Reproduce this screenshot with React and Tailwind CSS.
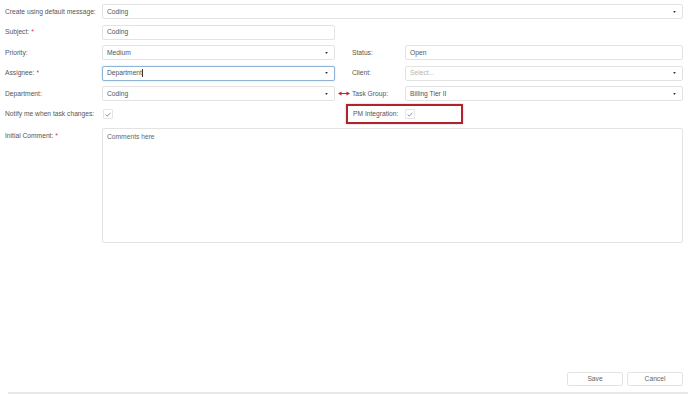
import React from 'react';

const Caret = () => (
  <svg width="3" height="2" viewBox="0 0 4 3" className="shrink-0 mr-[2px]">
    <path d="M0 0 L4 0 L2 3 Z" fill="#333" />
  </svg>
);

const Req = () => <span className="text-[#d33] ml-[2px]">*</span>;

const Field = ({ value, placeholder, select, focused, className = '' }) => (
  <div
    className={`h-[15px] flex items-center justify-between px-[4px] rounded-[2px] border bg-white ${
      focused ? 'border-[#8fb4d6] shadow-[0_0_2px_#bcd4ea]' : 'border-[#e3e3e3]'
    } ${className}`}
  >
    <span className={value ? 'text-[#555]' : 'text-[#b5b5b5]'}>
      {value || placeholder}
      {focused && <span className="inline-block w-px h-[8px] bg-[#333] align-middle" />}
    </span>
    {select && <Caret />}
  </div>
);

const Check = () => (
  <div className="w-[10px] h-[10px] rounded-[1px] border border-[#e6e6e6] flex items-center justify-center">
    <svg width="6" height="5" viewBox="0 0 6 5">
      <path d="M0.6 2.6 L2.3 4.1 L5.4 0.8" stroke="#6a8bb0" strokeWidth="0.9" fill="none" />
    </svg>
  </div>
);

const Arrows = () => (
  <svg width="12" height="5" viewBox="0 0 12 5">
    <path d="M0 2.5 L3.5 0.5 L3.5 4.5 Z" fill="#c0262d" />
    <path d="M12 2.5 L8.5 0.5 L8.5 4.5 Z" fill="#c0262d" />
    <rect x="3" y="2" width="6" height="1" fill="#c0262d" />
  </svg>
);

export default function App() {
  return (
    <div
      className="h-screen bg-white flex flex-col text-[6.7px] text-[#555]"
      style={{ fontFamily: '"Liberation Sans", Arial, sans-serif' }}
    >
      <div className="pt-[1.5px] pr-[5px]">
        {/* row 1 */}
        <div className="h-[20.5px] flex items-center">
          <div className="w-[102px] pl-[5px] shrink-0">Create using default message:</div>
          <Field value="Coding" select className="flex-1" />
        </div>

        {/* row 2 */}
        <div className="h-[20.5px] flex items-center">
          <div className="w-[102px] pl-[5px] shrink-0">Subject:<Req /></div>
          <Field value="Coding" className="w-[233px]" />
        </div>

        {/* row 3 */}
        <div className="h-[20.5px] flex items-center">
          <div className="w-[102px] pl-[5px] shrink-0">Priority:</div>
          <Field value="Medium" select className="w-[233px]" />
          <div className="w-[17px]" />
          <div className="w-[53px] shrink-0">Status:</div>
          <Field value="Open" className="flex-1" />
        </div>

        {/* row 4 */}
        <div className="h-[20.5px] flex items-center">
          <div className="w-[102px] pl-[5px] shrink-0">Assignee:<Req /></div>
          <Field value="Department" select focused className="w-[233px]" />
          <div className="w-[17px]" />
          <div className="w-[53px] shrink-0">Client:</div>
          <Field placeholder="Select..." select className="flex-1" />
        </div>

        {/* row 5 */}
        <div className="h-[20.5px] flex items-center">
          <div className="w-[102px] pl-[5px] shrink-0">Department:</div>
          <Field value="Coding" select className="w-[233px]" />
          <div className="w-[17px] flex items-center justify-center">
            <Arrows />
          </div>
          <div className="w-[53px] shrink-0">Task Group:</div>
          <Field value="Billing Tier II" select className="flex-1" />
        </div>

        {/* row 6 */}
        <div className="h-[20.5px] flex items-center">
          <div className="w-[102px] pl-[5px] shrink-0">Notify me when task changes:</div>
          <div className="w-[233px] pl-[1px]">
            <Check />
          </div>
          <div className="w-[11px]" />
          <div className="w-[117px] h-[20px] flex items-center border-2 border-[#b0232d] shadow-[0_0_2px_rgba(0,0,0,0.25)]">
            <div className="w-[57px] pl-[5px] shrink-0">PM Integration:</div>
            <Check />
          </div>
        </div>

        {/* row 7 */}
        <div className="flex pt-[3px]">
          <div className="w-[102px] pl-[5px] pt-[3px] shrink-0">Initial Comment:<Req /></div>
          <div className="flex-1 h-[115px] border border-[#e3e3e3] rounded-[2px] px-[4px] pt-[3px] text-[#666]">
            Comments here
          </div>
        </div>
      </div>

      <div className="flex-1" />

      <div className="flex justify-end gap-[4px] pr-[5px] pb-[6px]">
        <button className="w-[56px] h-[14px] border border-[#e3e3e3] rounded-[2px] text-[#666] bg-white">Save</button>
        <button className="w-[56px] h-[14px] border border-[#e3e3e3] rounded-[2px] text-[#666] bg-white">Cancel</button>
      </div>
      <div className="ml-[8px] h-[2px] bg-[#e8e8e8]" />
    </div>
  );
}
